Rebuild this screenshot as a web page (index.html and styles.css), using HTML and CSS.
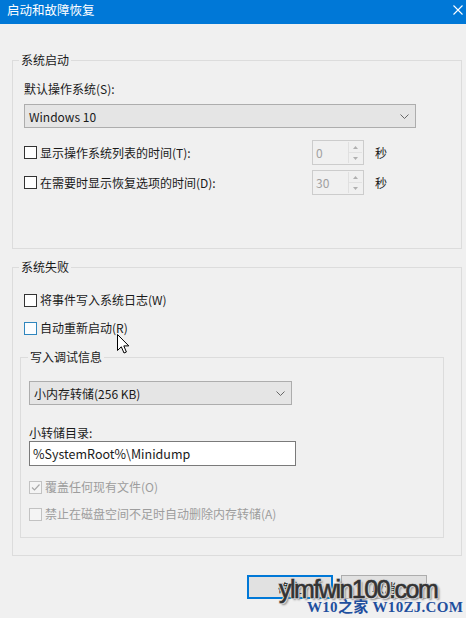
FILE: index.html
```html
<!DOCTYPE html>
<html lang="zh-CN">
<head>
<meta charset="utf-8">
<title>启动和故障恢复</title>
<link rel="stylesheet" href="styles.css">
</head>
<body>
<div class="window">
  <div class="titlebar">
    <span class="title">启动和故障恢复</span>
    <svg class="close" width="10" height="10" viewBox="0 0 10 10"><path d="M0.5 0.5 L9.5 9.5 M9.5 0.5 L0.5 9.5" stroke="#fff" stroke-width="1.1" fill="none"/></svg>
  </div>
  <div class="content">
    <fieldset class="group g-start">
      <legend>系统启动</legend>
      <div class="label os-label">默认操作系统(S):</div>
      <div class="select os-select">
        <span>Windows 10</span>
        <svg class="chev" width="9" height="5" viewBox="0 0 9 5"><path d="M0.5 0.5 L4.5 4.5 L8.5 0.5" stroke="#666" fill="none"/></svg>
      </div>
      <div class="trow first">
        <div class="check"><span class="cb"></span><span>显示操作系统列表的时间(T):</span></div>
        <div class="spin"><span class="val">0</span><span class="arrows"><span class="up"><svg width="5" height="3" viewBox="0 0 5 3"><path d="M0 3 L2.5 0 L5 3Z" fill="#b0b0b0"/></svg></span><span class="down"><svg width="5" height="3" viewBox="0 0 5 3"><path d="M0 0 L2.5 3 L5 0Z" fill="#b0b0b0"/></svg></span></span></div>
        <span class="unit">秒</span>
      </div>
      <div class="trow second">
        <div class="check"><span class="cb"></span><span>在需要时显示恢复选项的时间(D):</span></div>
        <div class="spin"><span class="val">30</span><span class="arrows"><span class="up"><svg width="5" height="3" viewBox="0 0 5 3"><path d="M0 3 L2.5 0 L5 3Z" fill="#b0b0b0"/></svg></span><span class="down"><svg width="5" height="3" viewBox="0 0 5 3"><path d="M0 0 L2.5 3 L5 0Z" fill="#b0b0b0"/></svg></span></span></div>
        <span class="unit">秒</span>
      </div>
    </fieldset>

    <fieldset class="group g-fail">
      <legend>系统失败</legend>
      <div class="check row-log"><span class="cb"></span><span>将事件写入系统日志(W)</span></div>
      <div class="check row-restart"><span class="cb hover"></span><span>自动重新启动(R)</span></div>
      <fieldset class="group g-debug">
        <legend>写入调试信息</legend>
        <div class="select dump-select">
          <span>小内存转储(256 KB)</span>
          <svg class="chev" width="9" height="5" viewBox="0 0 9 5"><path d="M0.5 0.5 L4.5 4.5 L8.5 0.5" stroke="#666" fill="none"/></svg>
        </div>
        <div class="label dir-label">小转储目录:</div>
        <div class="textbox">%SystemRoot%\Minidump</div>
        <div class="check disabled row-over"><span class="cb dis"><svg width="11" height="11" viewBox="0 0 11 11"><path d="M2 5.5 L4.5 8 L9.5 2.5" stroke="#a8a8a8" stroke-width="1.2" fill="none"/></svg></span><span>覆盖任何现有文件(O)</span></div>
        <div class="check disabled row-del"><span class="cb dis"></span><span>禁止在磁盘空间不足时自动删除内存转储(A)</span></div>
      </fieldset>
    </fieldset>

    <div class="buttons">
      <span class="btn default">确定</span>
      <span class="btn">取消</span>
    </div>
  </div>

  <svg class="cursor" width="13" height="21" viewBox="0 0 13 21"><path d="M0.5 0.5 L0.5 16.5 L4.3 12.8 L7 19 L9.4 18 L6.8 11.9 L11.8 11.9 Z" fill="#fff" stroke="#000" stroke-width="1" stroke-linejoin="miter"/></svg>
  <div class="wm-main">ylmfwin100.com</div>
  <div class="wm-sub">W10之家 W10ZJ.COM</div>
</div>
</body>
</html>
```

FILE: styles.css
```css
html, body {
  margin: 0;
  padding: 0;
}
body {
  background: #f0f0f0;
  font-family: "Noto Sans CJK SC", "Microsoft YaHei", sans-serif;
  font-size: 12px;
  color: #1a1a1a;
}
.window {
  position: relative;
  width: 466px;
  height: 618px;
  overflow: hidden;
  background: #f0f0f0;
}
.titlebar {
  height: 24px;
  background: #0078d7;
  display: flex;
  align-items: flex-start;
  justify-content: space-between;
  padding: 0 3px 0 7px;
  box-sizing: border-box;
}
.title {
  color: #fff;
  font-size: 12.5px;
  line-height: 20px;
}
.close {
  margin-top: 5px;
}
.content {
  padding: 28px 4px 0 12px;
}
.group {
  margin: 0;
  border: 1px solid #dcdcdc;
  min-width: 0;
}
.group legend {
  padding: 0 2px;
  line-height: 16px;
  font-size: 12px;
}
.g-start {
  padding: 0 11px 53px 11px;
}
.g-start legend {
  margin-left: -5px;
}
.label {
  line-height: 16px;
}
.os-label {
  margin-top: 13px;
}
.select {
  height: 24px;
  box-sizing: border-box;
  background: #e5e5e5;
  border: 1px solid #adadad;
  display: flex;
  align-items: center;
  justify-content: space-between;
  padding: 0 6px 0 4px;
}
.os-select {
  margin-top: 7px;
  width: 392px;
}
.chev {
  display: block;
}
.trow {
  display: flex;
  align-items: center;
  height: 25px;
}
.trow.first {
  margin-top: 12px;
}
.trow.second {
  margin-top: 5px;
}
.trow .check {
  width: 288px;
}
.check {
  display: flex;
  align-items: center;
  gap: 3px;
  line-height: 16px;
}
.cb {
  width: 13px;
  height: 13px;
  box-sizing: border-box;
  border: 1px solid #333;
  background: #fff;
  flex: none;
  display: flex;
  align-items: center;
  justify-content: center;
}
.cb.hover {
  border-color: #2f86be;
  background: #fbfdff;
}
.cb.dis {
  border-color: #c2c2c2;
  background: #f4f4f4;
}
.spin {
  width: 52px;
  height: 25px;
  box-sizing: border-box;
  border: 1px solid #cccccc;
  background: #f0f0f0;
  display: flex;
  align-items: center;
  justify-content: space-between;
  padding: 1px 1px 1px 3px;
  color: #a0a0a0;
}
.arrows {
  width: 14px;
  height: 21px;
  display: flex;
  flex-direction: column;
  border-left: 1px solid #e0e0e0;
  box-sizing: border-box;
}
.arrows .up, .arrows .down {
  flex: 1;
  display: flex;
  align-items: center;
  justify-content: center;
}
.arrows .up {
  border-bottom: 1px solid #e2e2e2;
}
.unit {
  margin-left: 11px;
}
.g-fail {
  margin-top: 10px;
  padding: 0 17px 17px 7px;
}
.g-fail > legend {
  margin-left: -1px;
}
.row-log {
  margin-top: 17px;
  padding-left: 4px;
}
.row-restart {
  margin-top: 12px;
  padding-left: 4px;
}
.g-debug {
  margin-top: 13px;
  padding: 0 8px 15px 8px;
}
.g-debug legend {
  margin-left: -1px;
}
.dump-select {
  margin-top: 16px;
  width: 263px;
}
.dir-label {
  margin-top: 20px;
}
.textbox {
  width: 267px;
  height: 25px;
  box-sizing: border-box;
  border: 1px solid #7a7a7a;
  background: #fff;
  padding: 0 3px;
  line-height: 23px;
  font-size: 12.5px;
}
.row-over {
  margin-top: 13px;
}
.row-del {
  margin-top: 11px;
}
.disabled {
  color: #9d9d9d;
}
.buttons {
  display: flex;
  justify-content: flex-end;
  gap: 8px;
  margin-top: 19px;
  padding-right: 35px;
}
.btn {
  width: 86px;
  height: 24px;
  box-sizing: border-box;
  border: 1px solid #adadad;
  background: #e1e1e1;
  display: flex;
  align-items: center;
  justify-content: center;
}
.btn.default {
  border: 2px solid #0078d7;
}
.cursor {
  position: absolute;
  left: 117px;
  top: 334px;
}
.wm-main {
  position: absolute;
  left: 279px;
  top: 577px;
  font-family: "Liberation Sans", Arial, sans-serif;
  font-size: 25px;
  line-height: 25px;
  letter-spacing: -1.5px;
  color: #333;
  -webkit-text-stroke: 0.6px #333;
  text-shadow: 1px 0 0 #d8d8d8, -1px 0 0 #d8d8d8, 0 1px 0 #d8d8d8, 0 -1px 0 #d8d8d8, 1px 1px 0 #d8d8d8, -1px -1px 0 #d8d8d8, 1px -1px 0 #d8d8d8, -1px 1px 0 #d8d8d8, 2px 2px 2px #888;
}
.wm-sub {
  position: absolute;
  left: 307px;
  top: 600px;
  font-family: "Liberation Serif", "Noto Sans CJK SC", serif;
  font-weight: bold;
  font-size: 15px;
  line-height: 15px;
  letter-spacing: 0.3px;
  color: #1f4f9e;
  white-space: nowrap;
}
```
